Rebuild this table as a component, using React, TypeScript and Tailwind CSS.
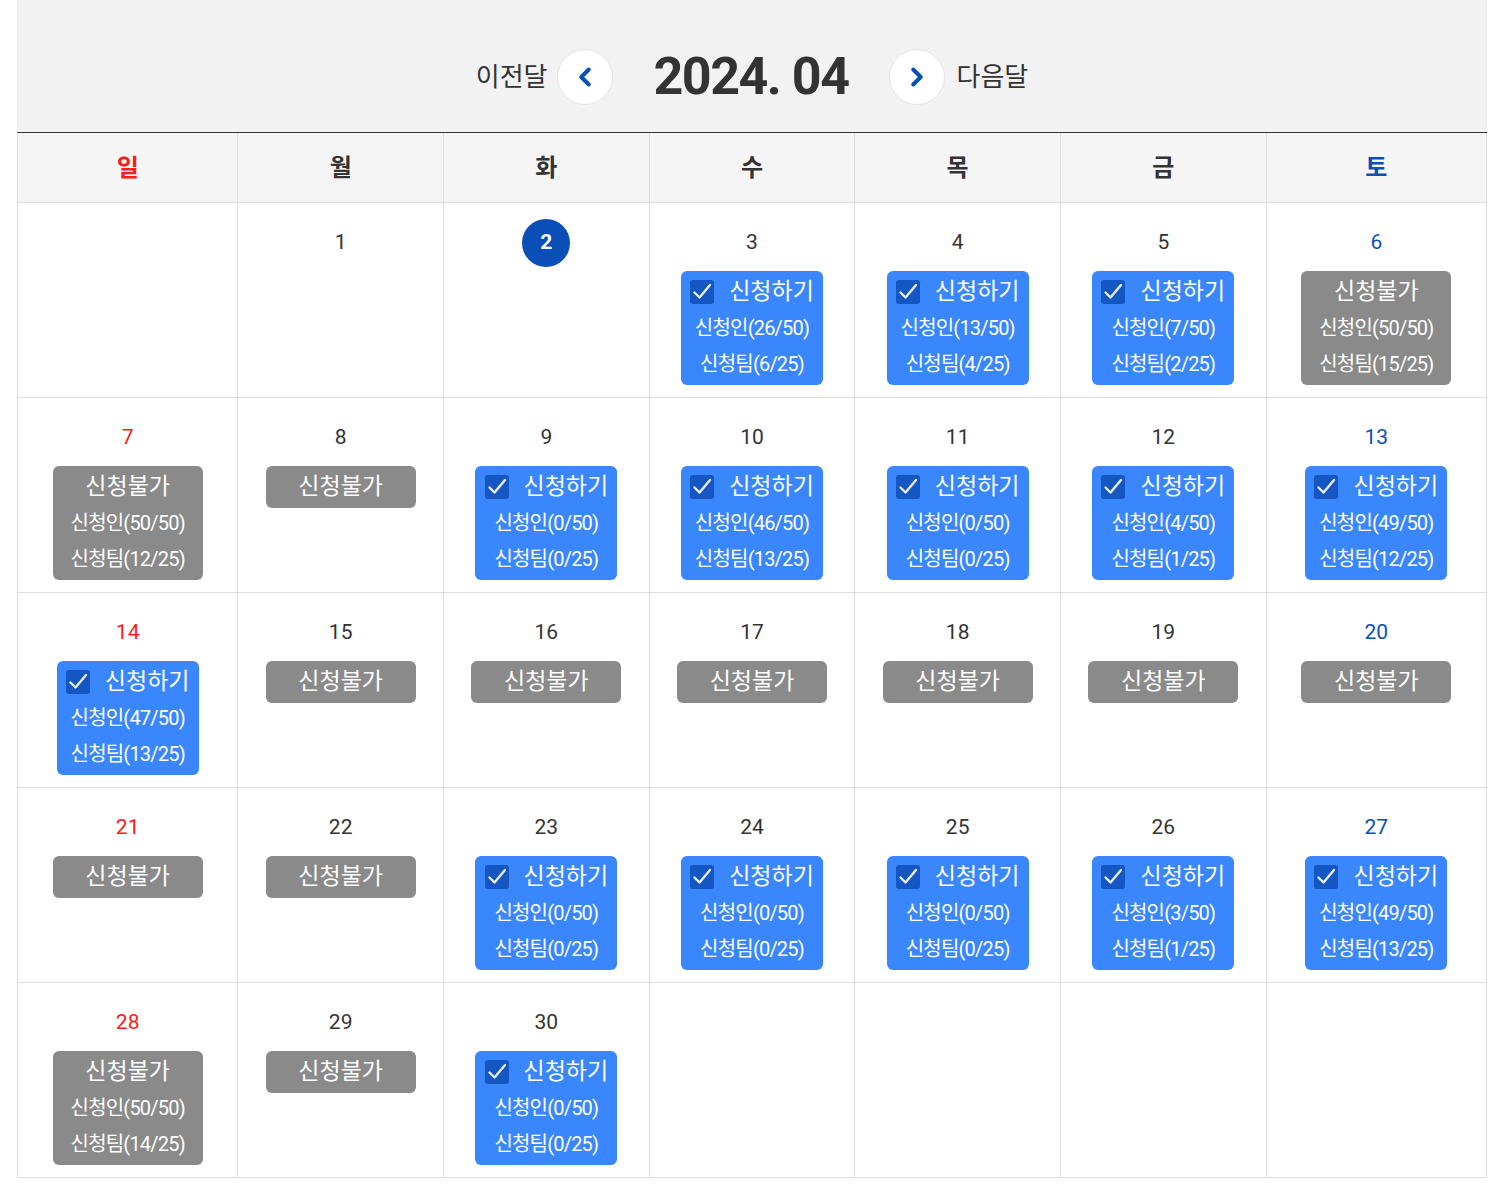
import { ChevronLeft, ChevronRight } from 'lucide-react';

type Day = {
  date: number;
  status?: 'open' | 'closed';
  people?: string;
  teams?: string;
};

const weeks: (Day | null)[][] = [
  [
    null,
    { date: 1 },
    { date: 2 },
    { date: 3, status: 'open', people: '26/50', teams: '6/25' },
    { date: 4, status: 'open', people: '13/50', teams: '4/25' },
    { date: 5, status: 'open', people: '7/50', teams: '2/25' },
    { date: 6, status: 'closed', people: '50/50', teams: '15/25' },
  ],
  [
    { date: 7, status: 'closed', people: '50/50', teams: '12/25' },
    { date: 8, status: 'closed' },
    { date: 9, status: 'open', people: '0/50', teams: '0/25' },
    { date: 10, status: 'open', people: '46/50', teams: '13/25' },
    { date: 11, status: 'open', people: '0/50', teams: '0/25' },
    { date: 12, status: 'open', people: '4/50', teams: '1/25' },
    { date: 13, status: 'open', people: '49/50', teams: '12/25' },
  ],
  [
    { date: 14, status: 'open', people: '47/50', teams: '13/25' },
    { date: 15, status: 'closed' },
    { date: 16, status: 'closed' },
    { date: 17, status: 'closed' },
    { date: 18, status: 'closed' },
    { date: 19, status: 'closed' },
    { date: 20, status: 'closed' },
  ],
  [
    { date: 21, status: 'closed' },
    { date: 22, status: 'closed' },
    { date: 23, status: 'open', people: '0/50', teams: '0/25' },
    { date: 24, status: 'open', people: '0/50', teams: '0/25' },
    { date: 25, status: 'open', people: '0/50', teams: '0/25' },
    { date: 26, status: 'open', people: '3/50', teams: '1/25' },
    { date: 27, status: 'open', people: '49/50', teams: '13/25' },
  ],
  [
    { date: 28, status: 'closed', people: '50/50', teams: '14/25' },
    { date: 29, status: 'closed' },
    { date: 30, status: 'open', people: '0/50', teams: '0/25' },
    null,
    null,
    null,
    null,
  ],
];

const weekdays = ['일', '월', '화', '수', '목', '금', '토'];
const TODAY = 2;

function dayColor(col: number) {
  if (col === 0) return 'text-[#ff1a1a]';
  if (col === 6) return 'text-[#0a4fb8]';
  return 'text-[#333]';
}

function Slot({ day }: { day: Day }) {
  if (!day.status) return null;
  const open = day.status === 'open';
  return (
    <div
      className={
        open
          ? 'mx-auto flex w-[142px] flex-col items-center rounded-[6px] bg-[#3a87fd] py-[3px] text-white'
          : 'mx-auto flex w-[150px] flex-col items-center rounded-[6px] bg-[#8a8a8a] py-[3px] text-white'
      }
    >
      <div className="flex h-[36px] items-center gap-[15px] text-[23px]">
        {open && (
          <span className="flex h-[24px] w-[24px] items-center justify-center rounded-[3px] bg-[#1456c2]">
            <svg width="22" height="22" viewBox="0 0 22 22" fill="none">
              <path d="M3.5 11.5l5 5L19 4" stroke="#e8eef8" strokeWidth="2.4" strokeLinecap="round" strokeLinejoin="round" />
            </svg>
          </span>
        )}
        <span>{open ? '신청하기' : '신청불가'}</span>
      </div>
      {day.people && (
        <div className="flex h-[36px] items-center text-[20px] tracking-[-0.8px]">신청인({day.people})</div>
      )}
      {day.teams && (
        <div className="flex h-[36px] items-center text-[20px] tracking-[-0.8px]">신청팀({day.teams})</div>
      )}
    </div>
  );
}

export default function App() {
  return (
    <div className="min-h-screen bg-white" style={{ fontFamily: 'Roboto, "Noto Sans CJK KR", sans-serif' }}>
      <div className="ml-[17px] w-[1470px]">
        <div className="flex h-[132px] items-center justify-center bg-[#f2f2f2] pt-[22px]">
          <span className="mr-[10px] text-[26px] text-[#333]">이전달</span>
          <button className="flex h-[56px] w-[56px] items-center justify-center rounded-full border border-[#e3e3e3] bg-white text-[#0a4fb8]">
            <ChevronLeft size={30} strokeWidth={3.2} />
          </button>
          <h1 className="mx-[40px] text-[52px] font-bold tracking-[-1.5px] text-[#333]">2024. 04</h1>
          <button className="flex h-[56px] w-[56px] items-center justify-center rounded-full border border-[#e3e3e3] bg-white text-[#0a4fb8]">
            <ChevronRight size={30} strokeWidth={3.2} />
          </button>
          <span className="ml-[12px] text-[26px] text-[#333]">다음달</span>
        </div>

        <div className="grid grid-cols-[15fr_14fr_14fr_14fr_14fr_14fr_15fr] border-l border-t border-l-[#ddd] border-t-[#333]">
          {weekdays.map((w, i) => (
            <div
              key={w}
              className={`flex h-[70px] items-center justify-center border-b border-r border-[#ddd] bg-[#f5f5f5] text-[24px] font-bold ${dayColor(i)}`}
            >
              {w}
            </div>
          ))}
          {weeks.flat().map((day, i) => (
            <div key={i} className="h-[195px] border-b border-r border-[#ddd] pt-[26px]">
              {day && (
                <>
                  <div className="mb-[14px] flex h-[28px] items-center justify-center">
                    {day.date === TODAY ? (
                      <span className="flex h-[48px] w-[48px] items-center justify-center rounded-full bg-[#0a4fb8] text-[21px] font-bold text-white">
                        {day.date}
                      </span>
                    ) : (
                      <span className={`text-[21px] ${dayColor(i % 7)}`}>{day.date}</span>
                    )}
                  </div>
                  <Slot day={day} />
                </>
              )}
            </div>
          ))}
        </div>
      </div>
    </div>
  );
}
